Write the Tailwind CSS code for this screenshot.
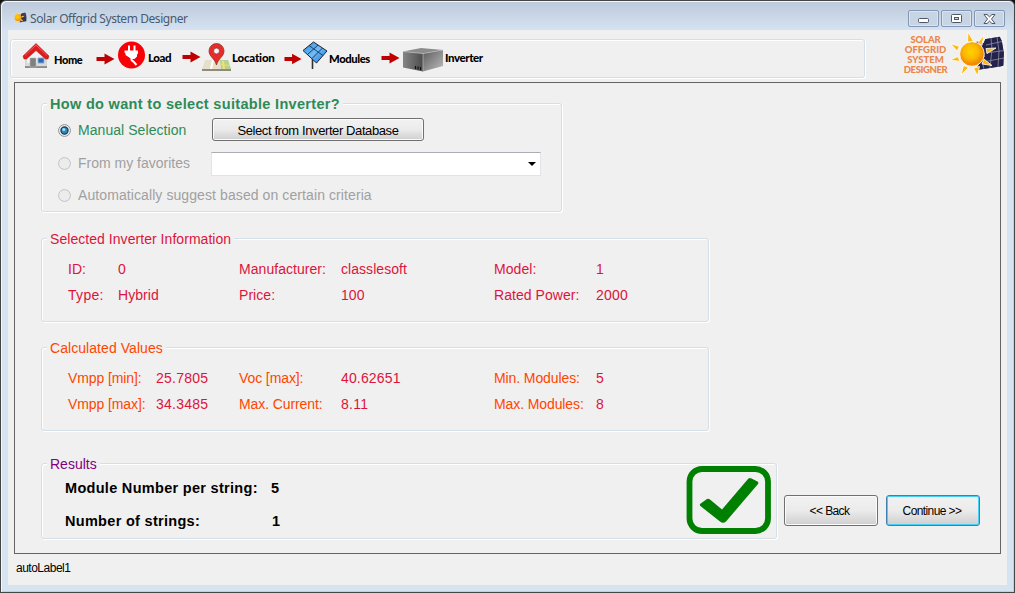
<!DOCTYPE html>
<html lang="en">
<head>
<meta charset="utf-8">
<title>Solar Offgrid System Designer</title>
<script src="https://cdn.jsdelivr.net/npm/@tailwindcss/browser@4"></script>
</head>
<body class="w-[1015px] h-[593px] overflow-hidden bg-[#111] font-['Liberation_Sans',Arial,sans-serif] text-[14px] leading-[18px] whitespace-nowrap">
<svg width="0" height="0" class="absolute">
  <defs>
    <linearGradient id="metal" x1="0" x2="1"><stop offset="0" stop-color="#858585"/><stop offset="1" stop-color="#4c4c4c"/></linearGradient>
    <linearGradient id="metalSide" x1="0" x2="1" y1="0" y2="1"><stop offset="0" stop-color="#5b5b5b"/><stop offset="1" stop-color="#bdbdbd"/></linearGradient>
    <linearGradient id="panelBlue" x1="0" x2="1" y1="0" y2="1"><stop offset="0" stop-color="#2f8be0"/><stop offset=".5" stop-color="#6fbcf8"/><stop offset="1" stop-color="#1b6fd0"/></linearGradient>
    <radialGradient id="sun" cx=".45" cy=".4"><stop offset="0" stop-color="#ffd200"/><stop offset=".6" stop-color="#fdb800"/><stop offset="1" stop-color="#f08a00"/></radialGradient>
    <symbol id="arrow" viewBox="0 0 19 12"><path fill="#c00000" d="M.5 4h8V.5L18.500 6l-10 5.500V8H.5z"/></symbol>
    <symbol id="solar" viewBox="0 0 56 48">
      <path fill="#22224a" stroke="#fff" stroke-width="1" d="M24 10.500l5-.5 4 2 2-4.500L50 5l2.500 5 2 12-.5 13-3 1-23 3.500-1-4 7-10-3-10z"/>
      <path fill="none" stroke="#8e8ea6" stroke-width=".8" d="M36 14l16-3.500M36 22l18-2.500M33 31l21-4M41 7l1 11 -2 19M47 6l2 14-1 16M31 26l3 12"/>
      <g stroke="#fff" stroke-width=".8" stroke-linejoin="round">
        <path fill="#fdb913" d="M17.500 11L18 1l5.500 9.500zM28 11.500L34 4l-2 10.500zM36 17.500l10-.5-9 5.500zM34 28l8 6.500L32 33zM23.500 37l6-1.500-2 9.500zM13.500 34.500l5 2L11 44zM8 25.500l2 5L0 29zM9.500 15.500L7 20 .5 12.500z"/>
        <circle cx="22" cy="23" r="12.300" fill="url(#sun)"/>
      </g>
    </symbol>
  </defs>
</svg>
<div class="flex flex-col w-[1015px] h-[593px] border border-[#464646] rounded-t-[6px] bg-[#d6e3f1] shadow-[inset_1px_1px_0_#f4f8fc,inset_-1px_-1px_0_#a9dbe6]">
  <!-- title bar -->
  <div class="flex items-start h-[29px] mx-px mt-px -mb-px pl-[10px] pr-[8px] rounded-t-[5px] bg-linear-to-b from-[#bccadb] to-[#d5e3f2]">
    <svg class="w-[15px] h-[14px] mt-[9px]" viewBox="0 0 56 48" preserveAspectRatio="none"><use href="#solar" width="56" height="48"/></svg>
    <div class="ml-[3px] mt-[8px] grow font-['Noto_Sans',sans-serif] text-[12px] leading-[18px] tracking-[-0.43px] text-[#4a5a70]">Solar Offgrid System Designer</div>
    <div class="flex gap-[2px] mt-[8px] text-[#4f566b]">
      <div class="w-[31px] h-[17px] border border-[#8496b4] rounded-[2px] shadow-[inset_0_0_0_1px_#dbe5f0] bg-[#c6d4e3] flex items-center justify-center"><svg width="13" height="9"><rect x="1.5" y="4.5" width="10" height="4" rx="1" fill="#fff" stroke="currentColor"/></svg></div>
      <div class="w-[31px] h-[17px] border border-[#8496b4] rounded-[2px] shadow-[inset_0_0_0_1px_#dbe5f0] bg-[#c6d4e3] flex items-center justify-center"><svg width="11" height="9"><rect x=".5" y=".5" width="10" height="8" rx="1" fill="#fff" stroke="currentColor"/><rect x="3.5" y="3.5" width="4" height="2" fill="#c6d4e3" stroke="currentColor"/></svg></div>
      <div class="w-[31px] h-[17px] border border-[#8496b4] rounded-[2px] shadow-[inset_0_0_0_1px_#dbe5f0] bg-[#c6d4e3] flex items-center justify-center"><svg width="13" height="10"><path d="M1 .5h3l2.500 2.400L9 .5h3L8.500 5 12 9.500H9L6.500 7.100 4 9.500H1L4.500 5z" fill="#fff" stroke="currentColor"/></svg></div>
    </div>
  </div>
  <!-- client area -->
  <div class="flex flex-col w-[999px] h-[555px] ml-[7px] bg-[#f0f0f0]">
    <div class="flex items-start h-[52px] pl-[2px]">
      <div class="flex items-start w-[855px] h-[39px] mt-[9px] border border-[#d5dfe8] rounded-[3px] shadow-[1px_1px_0_#fff,inset_1px_1px_0_#fff] font-['Lato',sans-serif] font-black text-[11.500px] leading-[14px] tracking-[-0.4px] text-black">
        <svg class="ml-[11px] mt-[3px] shrink-0" width="28" height="27" viewBox="0 0 28 27">
          <path fill="#8b8b8b" d="M3 23h22v2H3z"/><path fill="#f2f2f2" stroke="#a9a9a9" stroke-width=".7" d="M4 12l10-9 10 9v11H4z"/>
          <path fill="#d9d9d9" d="M4 20h20v3H4z"/><path fill="#7c8280" stroke="#bbb" stroke-width=".6" d="M8 15h6v9H8z"/><path fill="#2968b4" stroke="#89a8cc" d="M16 15h6v5h-6z"/>
          <path fill="#dd1c20" stroke="#a91013" stroke-width=".5" d="M14 .5L1 13l1 3h2.500l9.500-8.500 9.500 8.500H26l1-3z"/><path fill="none" stroke="#f66" stroke-width=".8" d="M3 12.500l11-10.500 11 10.500"/>
        </svg>
        <div class="ml-[4px] mt-[13px] w-[42px] text-[11px]">Home</div>
        <svg class="mt-[13px] shrink-0" width="19" height="12"><use href="#arrow" width="19" height="12"/></svg>
        <svg class="ml-[3px] mt-[1px] shrink-0" width="27" height="28" viewBox="0 0 27 28"><circle cx="13.500" cy="14" r="13.500" fill="#f80006"/><path fill="#fff" d="M10 4.500h2v5h3.500v-5h2v5H20v3l-1 1v2l-2.500 2.500h-3L7.500 14v-1.500L6.500 11.500v-2H10z"/><path d="M13.500 17c-.5 2.500.5 3 2 3.500l3 3.500" stroke="#fff" stroke-width="2" fill="none"/></svg>
        <div class="ml-[3px] mt-[11px] w-[34px]">Load</div>
        <svg class="mt-[11px] shrink-0" width="19" height="12"><use href="#arrow" width="19" height="12"/></svg>
        <svg class="mt-[3px] shrink-0" width="31" height="29" viewBox="0 0 31 29">
          <path fill="#8e8a7c" d="M1 26h29v2H1z"/><path fill="#e6e0cb" d="M4 17h23l3 9H1z"/><path fill="#b5d294" d="M19 17h8l3 9H20z"/><path fill="#fff" d="M11 17l-2 9h2l2-9z"/><path fill="#f4e36a" d="M21 18h2l1 8h-2z"/><path stroke="#f5dd65" d="M20 21.500l9 1"/>
          <path fill="#e52c28" stroke="#8f3532" stroke-width=".8" d="M15.500 22C13.500 15 8 13.500 8 8a7.500 7.500 0 0 1 15 0c0 5.500-5.500 7-7.500 14z"/><circle cx="15.500" cy="8" r="3" fill="#f3f3f3" stroke="#8f3532" stroke-width=".8"/>
        </svg>
        <div class="mt-[11px] w-[52px] tracking-[-0.2px]">Location</div>
        <svg class="mt-[13px] shrink-0" width="18" height="12"><use href="#arrow" width="18" height="12"/></svg>
        <svg class="mt-px shrink-0" width="26" height="29" viewBox="0 0 26 29"><path stroke="#333" stroke-width="1.600" d="M10.500 18v10"/><path fill="url(#panelBlue)" stroke="#17263c" d="M1 9.500L11.500 1 25 10 14.500 22z"/><path fill="none" stroke="#17324f" stroke-width=".9" d="M7 4.500L21 14.500M5.500 13.500L16 4M10 17.500L20.500 7"/></svg>
        <div class="mt-[12px] w-[53px] pl-px text-[11.250px]">Modules</div>
        <svg class="mt-[12px] shrink-0" width="19" height="12"><use href="#arrow" width="19" height="12"/></svg>
        <svg class="ml-[3px] mt-[8px] shrink-0" width="40" height="24" viewBox="0 0 40 24"><path fill="#8c8c8c" d="M0 3.500L18 0l22 2-20 3.500z"/><path fill="url(#metal)" d="M0 3.500l20 2v18L0 19.500z"/><path fill="url(#metalSide)" d="M20 5.500L40 2v16l-20 5.500z"/><path fill="none" stroke="#bdbdbd" stroke-width=".7" d="M0 3.500l20 2L40 2M20 5.500v18"/><path stroke="#111" stroke-width="1.200" d="M12.500 18v3M15 18.500v3M17.500 19v3"/></svg>
        <div class="ml-[2px] mt-[11px]">Inverter</div>
      </div>
      <div class="ml-[36px] mt-[5px] w-[49px] flex flex-col items-center font-['Lato',sans-serif] font-black text-[9.500px] leading-[10px] text-[#ec8648]">
        <div class="tracking-[-0.1px]">SOLAR</div><div>OFFGRID</div><div>SYSTEM</div><div class="tracking-[-0.4px]">DESIGNER</div>
      </div>
      <svg class="mt-px shrink-0" width="56" height="48"><use href="#solar" width="56" height="48"/></svg>
    </div>
    <!-- wizard page -->
    <div class="flex items-start w-[987px] h-[472px] ml-[6px] border border-[#646464] pl-[26px] pt-[20px]">
      <div class="flex flex-col w-[736px] shrink-0">
        <section class="w-[521px] h-[109px] border border-[#d5dfe8] rounded-[3px] shadow-[1px_1px_0_#fff,inset_1px_1px_0_#fff] flex flex-col items-start text-[#a0a0a0]">
          <h2 class="-mt-[9px] ml-[5px] px-[3px] h-[18px] bg-[#f0f0f0] font-bold text-[14.500px] text-[#2e8b57] tracking-[0.32px]">How do want to select suitable Inverter?</h2>
          <div class="flex items-center h-[33px] mt-px ml-[17px] text-[#2e8b57]">
            <svg class="-ml-px mr-px" width="13" height="13"><circle cx="6.500" cy="6.500" r="5.900" fill="#f4f4f4" stroke="#8e8f8f"/><circle cx="6.500" cy="6.500" r="3.600" fill="#2e88b8" stroke="#1c3554" stroke-width="1.200"/><circle cx="5.800" cy="5.600" r="1.500" fill="#a5e2f8"/></svg>
            <div class="ml-[6px] w-[134px] tracking-[0.06px]">Manual Selection</div>
            <button class="w-[212px] h-[23px] -mt-[2px] border border-[#707070] rounded-[3px] shadow-[inset_0_0_0_1px_#fbfbfb] bg-linear-to-b from-[#f2f2f2] from-0% via-[#ebebeb] via-50% to-[#cfcfcf] text-black text-[13px] tracking-[-0.4px] pt-[3px]">Select from Inverter Database</button>
          </div>
          <div class="flex items-center h-[33px] mt-px ml-[17px]">
            <svg class="-ml-px mr-px" width="13" height="13"><circle cx="6.500" cy="6.500" r="5.900" fill="#ececec" stroke="#c2c2c2"/></svg>
            <div class="ml-[6px] w-[133px]">From my favorites</div>
            <div class="w-[330px] h-[24px] mt-px bg-white border border-[#e2e3ea] border-t-[#abadb3] flex items-center justify-end pr-[4px]"><svg width="8" height="4"><path d="M0 0h8L4 4z"/></svg></div>
          </div>
          <div class="flex items-center h-[33px] ml-[17px]">
            <svg class="-ml-px mr-px" width="13" height="13"><circle cx="6.500" cy="6.500" r="5.900" fill="#ececec" stroke="#c2c2c2"/></svg>
            <div class="ml-[6px] tracking-[0.09px]">Automatically suggest based on certain criteria</div>
          </div>
        </section>
        <section class="w-[668px] h-[84px] mt-[26px] border border-[#d5dfe8] rounded-[3px] shadow-[1px_1px_0_#fff,inset_1px_1px_0_#fff] flex flex-col items-start text-[#dc143c] tracking-[0.05px]">
          <h2 class="-mt-[9px] ml-[5px] px-[3px] h-[18px] bg-[#f0f0f0]">Selected Inverter Information</h2>
          <div class="ml-[26px] mt-[8px] grid grid-cols-[50px_121px_102px_153px_102px_60px] auto-rows-[26px] items-center">
            <div>ID:</div><div>0</div><div>Manufacturer:</div><div>classlesoft</div><div>Model:</div><div>1</div>
            <div class="tracking-[0.3px]">Type:</div><div>Hybrid</div><div>Price:</div><div>100</div><div>Rated Power:</div><div class="tracking-[0.25px]">2000</div>
          </div>
        </section>
        <section class="w-[668px] h-[84px] mt-[25px] border border-[#d5dfe8] rounded-[3px] shadow-[1px_1px_0_#fff,inset_1px_1px_0_#fff] flex flex-col items-start text-[#ff4500]">
          <h2 class="-mt-[9px] ml-[5px] px-[3px] h-[18px] bg-[#f0f0f0] tracking-[0.06px]">Calculated Values</h2>
          <div class="ml-[26px] mt-[8px] grid grid-cols-[88px_83px_102px_153px_102px_60px] auto-rows-[26px] items-center tracking-[-0.1px]">
            <div>Vmpp [min]:</div><div class="text-[#dc143c] tracking-[0.25px]">25.7805</div><div>Voc [max]:</div><div class="text-[#dc143c] tracking-[0.15px]">40.62651</div><div>Min. Modules:</div><div class="text-[#dc143c]">5</div>
            <div>Vmpp [max]:</div><div class="text-[#dc143c] tracking-[0.25px]">34.3485</div><div>Max. Current:</div><div class="text-[#dc143c] tracking-[0.25px]">8.11</div><div>Max. Modules:</div><div class="text-[#dc143c]">8</div>
          </div>
        </section>
        <section class="w-[736px] h-[76px] mt-[32px] border border-[#d5dfe8] rounded-[3px] shadow-[1px_1px_0_#fff,inset_1px_1px_0_#fff] flex justify-between items-start">
          <div>
            <h2 class="-mt-[9px] ml-[5px] px-[3px] h-[18px] w-fit bg-[#f0f0f0] text-[#800080]">Results</h2>
            <div class="-mt-[2px] ml-[23px] grid grid-cols-[206px_30px] auto-rows-[33px] items-center font-bold text-[14.500px] text-black tracking-[0.3px]">
              <div>Module Number per string:</div><div>5</div>
              <div>Number of strings:</div><div class="pl-px">1</div>
            </div>
          </div>
          <svg class="mr-[5px] mt-[2px]" width="85" height="68" viewBox="0 0 85 68"><rect x="3.500" y="3" width="78.500" height="62" rx="12.500" fill="none" stroke="#008000" stroke-width="5.800"/><path fill="#008000" d="M14 38l7-5q1.500-.5 3 .5l12 10L62 13q1.500-1.500 3.500-.5l6 3q1.500 1 .5 2.500L40 55.500q-3 2.500-6 0L15 40.500q-1.500-1-1-2.500z"/></svg>
        </section>
      </div>
      <div class="flex gap-[8px] ml-[7px] mt-[392px] text-[12px] text-black tracking-[-0.6px]">
        <button class="w-[94px] h-[31px] border border-[#707070] rounded-[3px] shadow-[inset_0_0_0_1px_#fbfbfb] bg-linear-to-b from-[#f2f2f2] via-[#ebebeb] to-[#cfcfcf] pr-[3px]">&lt;&lt; Back</button>
        <button class="w-[94px] h-[31px] border border-[#3c7fb1] rounded-[3px] shadow-[inset_0_0_0_1px_#46d0f6] bg-linear-to-b from-[#f2f2f2] via-[#ebebeb] to-[#cfcfcf] pr-[2px]">Continue &gt;&gt;</button>
      </div>
    </div>
    <div class="ml-[8px] mt-[5px] text-[12px] text-black tracking-[-0.5px]">autoLabel1</div>
  </div>
</div>
</body>
</html>
